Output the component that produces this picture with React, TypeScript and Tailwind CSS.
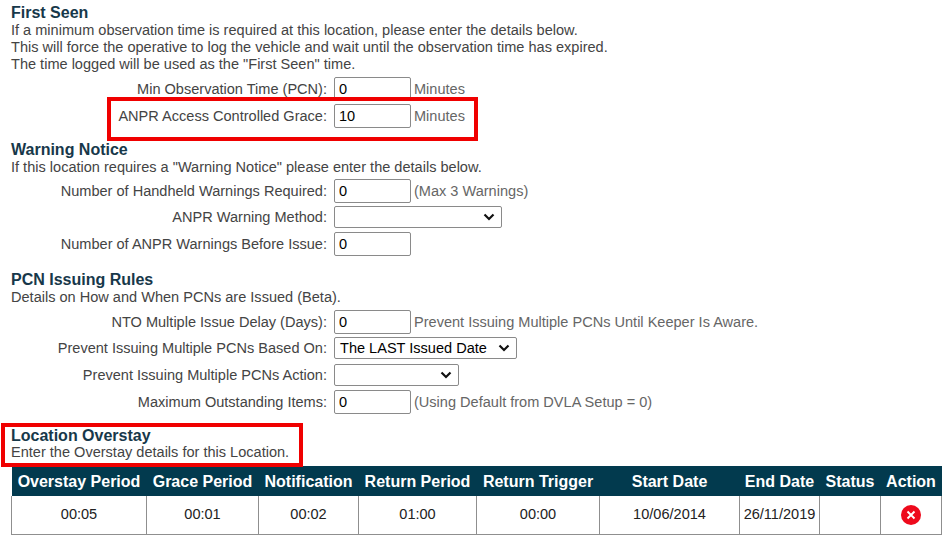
import React from "react";

const COLS = [
  { title: "Overstay Period", value: "00:05", width: 135 },
  { title: "Grace Period", value: "00:01", width: 112 },
  { title: "Notification", value: "00:02", width: 100 },
  { title: "Return Period", value: "01:00", width: 118 },
  { title: "Return Trigger", value: "00:00", width: 123 },
  { title: "Start Date", value: "10/06/2014", width: 140 },
  { title: "End Date", value: "26/11/2019", width: 80 },
  { title: "Status", value: "", width: 61 },
  { title: "Action", value: "", width: 61 },
];

function Row({ label, className, children }: { label: string; className?: string; children: React.ReactNode }) {
  return (
    <div className={`flex items-center ${className ?? ""}`}>
      <label className="w-[323px] text-right pr-[7px] shrink-0 whitespace-nowrap">{label}</label>
      {children}
    </div>
  );
}

function TextBox({ value }: { value: string }) {
  return (
    <input
      readOnly
      value={value}
      className="w-[77px] h-[24px] border border-[#8a8a8a] rounded-[2px] px-[4px] text-[14.55px] text-black bg-white outline-none shrink-0"
    />
  );
}

function Select({ value, width }: { value?: string; width: string }) {
  return (
    <div className={`${width} h-[22px] border border-[#8a8a8a] rounded-[2px] pl-[5px] pr-[6px] flex items-center justify-between text-black bg-white shrink-0`}>
      <span>{value}</span>
      <svg width="12" height="8" viewBox="0 0 12 8" fill="none">
        <path d="M1.5 1.5 6 6l4.5-4.5" stroke="#111" strokeWidth="2.2" />
      </svg>
    </div>
  );
}

function Hint({ children }: { children: React.ReactNode }) {
  return <span className="ml-[3px] text-[#666] whitespace-nowrap">{children}</span>;
}

function Heading({ children, className }: { children: React.ReactNode; className?: string }) {
  return <h3 className={`font-bold text-[16px] text-[#17384a] ${className ?? "leading-[18px]"}`}>{children}</h3>;
}

export default function App() {
  return (
    <div className="relative w-[945px] h-[536px] overflow-hidden bg-white pl-[11px] pt-[4px] text-[14.55px] leading-[17px] text-[#444] font-['Liberation_Sans',Arial,sans-serif]">
      <Heading>First Seen</Heading>
      <p>If a minimum observation time is required at this location, please enter the details below.</p>
      <p>This will force the operative to log the vehicle and wait until the observation time has expired.</p>
      <p>The time logged will be used as the "First Seen" time.</p>

      <Row label="Min Observation Time (PCN):" className="mt-[4px]">
        <TextBox value="0" />
        <Hint>Minutes</Hint>
      </Row>
      <Row label="ANPR Access Controlled Grace:" className="mt-[3px]">
        <TextBox value="10" />
        <Hint>Minutes</Hint>
      </Row>

      <Heading className="mt-[13px] leading-[18px]">Warning Notice</Heading>
      <p>If this location requires a "Warning Notice" please enter the details below.</p>
      <Row label="Number of Handheld Warnings Required:" className="mt-[3px]">
        <TextBox value="0" />
        <Hint>(Max 3 Warnings)</Hint>
      </Row>
      <Row label="ANPR Warning Method:" className="mt-[3px]">
        <Select width="w-[168px]" />
      </Row>
      <Row label="Number of ANPR Warnings Before Issue:" className="mt-[4px]">
        <TextBox value="0" />
      </Row>

      <Heading className="mt-[15px] leading-[18px]">PCN Issuing Rules</Heading>
      <p>Details on How and When PCNs are Issued (Beta).</p>
      <Row label="NTO Multiple Issue Delay (Days):" className="mt-[4px]">
        <TextBox value="0" />
        <Hint>Prevent Issuing Multiple PCNs Until Keeper Is Aware.</Hint>
      </Row>
      <Row label="Prevent Issuing Multiple PCNs Based On:" className="mt-[3px]">
        <Select width="w-[183px]" value="The LAST Issued Date" />
      </Row>
      <Row label="Prevent Issuing Multiple PCNs Action:" className="mt-[5px]">
        <Select width="w-[125px]" />
      </Row>
      <Row label="Maximum Outstanding Items:" className="mt-[4px]">
        <TextBox value="0" />
        <Hint>(Using Default from DVLA Setup = 0)</Hint>
      </Row>

      <Heading className="mt-[14px] leading-[16px]">Location Overstay</Heading>
      <p>Enter the Overstay details for this Location.</p>

      <table className="mt-[5px] w-[930px] table-fixed border-collapse">
        <colgroup>
          {COLS.map((c) => (
            <col key={c.title} style={{ width: c.width }} />
          ))}
        </colgroup>
        <thead>
          <tr className="h-[30px] bg-[#023a4e] text-white text-[16px] font-bold">
            {COLS.map((c) => (
              <th key={c.title} className="p-0 text-center whitespace-nowrap font-bold">{c.title}</th>
            ))}
          </tr>
        </thead>
        <tbody>
          <tr className="h-[38px] text-[#222]">
            {COLS.map((c) => (
              <td key={c.title} className="p-0 text-center border border-[#8f8f8f] border-t-0">
                {c.title === "Action" ? (
                  <span className="inline-flex w-[20px] h-[20px] rounded-full bg-[#ee0a1c] items-center justify-center align-middle">
                    <svg width="12" height="12" viewBox="0 0 12 12" fill="none">
                      <path d="M2.5 2.5l7 7M9.5 2.5l-7 7" stroke="#fff" strokeWidth="1.9" />
                    </svg>
                  </span>
                ) : (
                  c.value
                )}
              </td>
            ))}
          </tr>
        </tbody>
      </table>

      <div className="absolute left-[107px] top-[97px] w-[371px] h-[44px] border-[4px] border-[#f00000]" />
      <div className="absolute left-[1px] top-[423px] w-[302px] h-[44px] border-[4px] border-[#f00000]" />
    </div>
  );
}
